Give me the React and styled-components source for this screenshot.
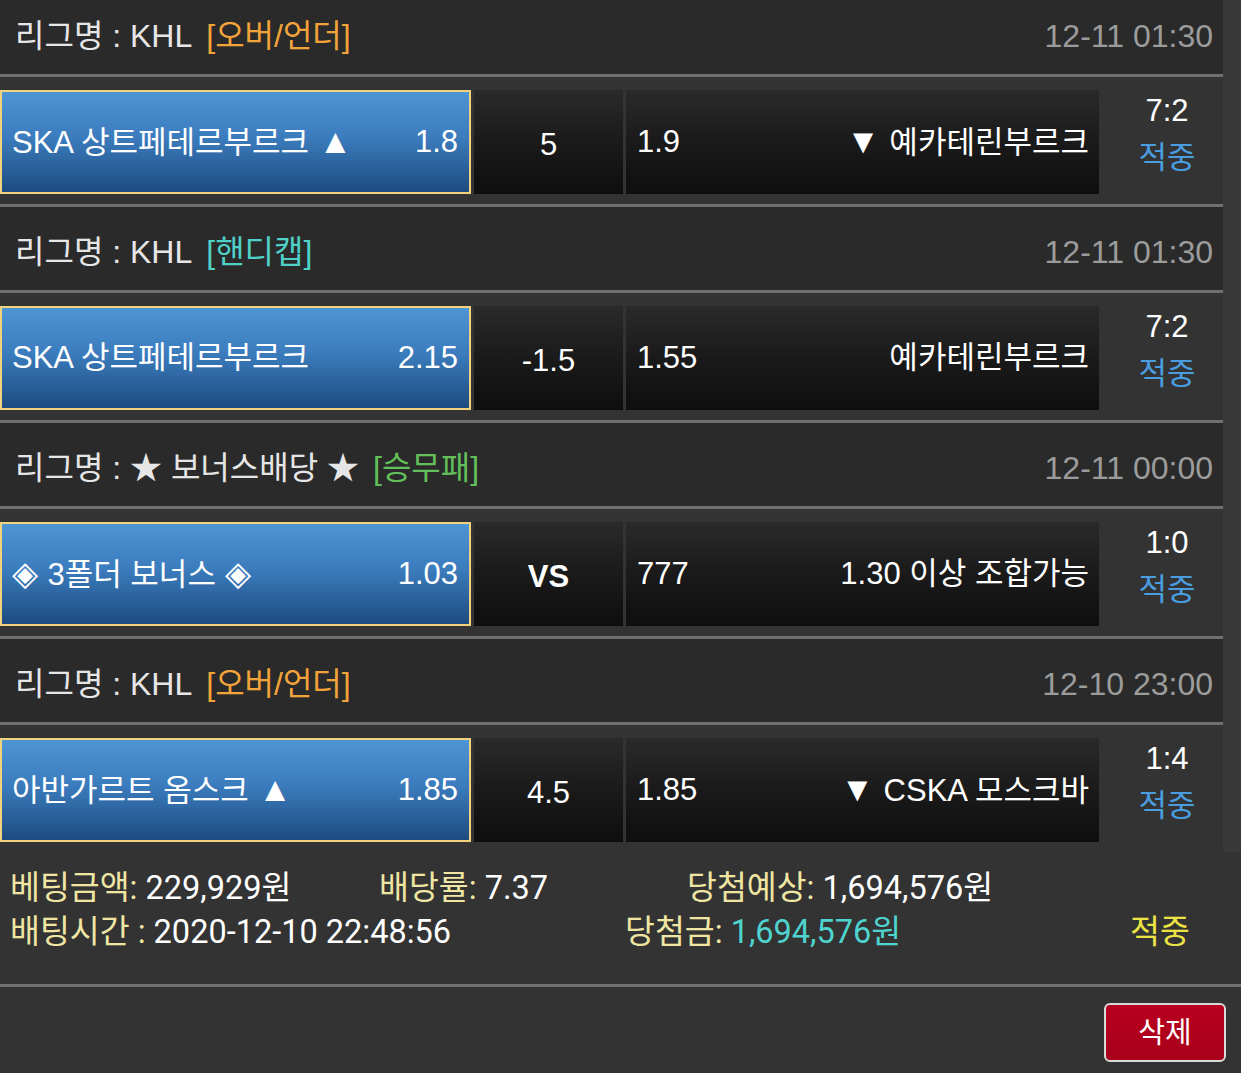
import React from 'react';
import styled, { createGlobalStyle } from 'styled-components';

const Global = createGlobalStyle`
  html, body { margin: 0; padding: 0; background: #393939; }
  body {
    font-family: "Liberation Sans", "Noto Sans CJK KR", sans-serif;
    overflow: hidden;
  }
`;

const Page = styled.div`
  width: 1241px;
  height: 1073px;
  overflow: hidden;
`;

const List = styled.div`
  width: 1223px;
  margin-top: -9px;
`;

const Header = styled.div`
  box-sizing: border-box;
  height: 86px;
  background: #2a2a2a;
  border-bottom: 3px solid #707070;
  display: flex;
  align-items: center;
  justify-content: space-between;
  padding: 6px 10px 0 15px;
  font-size: 32px;
  line-height: 36px;
  color: #e6e6e6;
`;

const League = styled.div`
  display: flex;
  align-items: center;
  white-space: pre;
`;

const Tag = styled.span`
  color: ${p => p.$color};
  margin-left: 14px;
`;

const DateText = styled.span`
  color: #9c9c9c;
`;

const Row = styled.div`
  box-sizing: border-box;
  height: ${p => (p.$last ? 127 : 130)}px;
  background: #333;
  border-bottom: ${p => (p.$last ? 'none' : '3px solid #707070')};
  padding: 13px 0 10px;
  display: flex;
  font-size: 31px;
  line-height: 36px;
  color: #fff;
`;

const HomeCell = styled.div`
  box-sizing: border-box;
  width: 471px;
  height: 104px;
  margin-right: 3px;
  border: 2px solid #f2d27c;
  background: linear-gradient(to bottom, #4e95d6 0%, #3b7cbd 45%, #1d4b80 100%);
  display: flex;
  align-items: center;
  justify-content: space-between;
  padding: 0 11px 0 10px;
`;

const Arrow = styled.span`
  font-size: 34px;
`;

const Diamond = styled.span`
  font-size: 34px;
`;

const DarkCell = styled.div`
  box-sizing: border-box;
  height: 104px;
  background: linear-gradient(to bottom, #2a2a2a 0%, #1a1a1a 50%, #0e0e0e 100%);
  display: flex;
  align-items: center;
`;

const MidCell = styled(DarkCell)`
  width: 149px;
  margin-right: 3px;
  justify-content: center;
  padding-top: 5px;
  font-weight: ${p => (p.$bold ? 700 : 400)};
`;

const AwayCell = styled(DarkCell)`
  width: 473px;
  justify-content: space-between;
  padding: 0 10px 0 11px;
`;

const ScoreCell = styled.div`
  width: 124px;
  height: 104px;
  padding-left: 12px;
  box-sizing: border-box;
  display: flex;
  flex-direction: column;
  align-items: center;
  justify-content: center;
  line-height: 47px;
  margin-top: -8px;
`;

const Hit = styled.span`
  color: ${p => p.$color};
`;

const Footer = styled.div`
  box-sizing: border-box;
  width: 1241px;
  height: 135px;
  padding: 14px 0 0 10px;
  border-bottom: 3px solid #707070;
  font-family: "Roboto", "Noto Sans CJK KR", sans-serif;
  font-size: 32.5px;
  line-height: 44px;
  color: #fff;
  background: #333;
`;

const FooterLine = styled.div`
  display: grid;
  grid-template-columns: ${p => p.$cols};
  white-space: pre;
`;

const Label = styled.span`
  color: #f0e6a4;
`;

const Value = styled.span`
  color: ${p => p.$color || '#fff'};
`;

const Actions = styled.div`
  display: flex;
  justify-content: flex-end;
  padding: 16px 15px 0 0;
  background: #333;
  height: 86px;
  box-sizing: border-box;
`;

const DeleteButton = styled.button`
  width: 122px;
  height: 59px;
  border: 2px solid #d9d9d9;
  border-radius: 6px;
  background: linear-gradient(to bottom, #b8001f, #a8001a);
  color: #fff;
  font-family: "Noto Sans CJK KR", sans-serif;
  font-size: 29px;
  padding: 0 0 5px;
  cursor: pointer;
`;

const games = [
  {
    tag: '[오버/언더]', tagColor: '#f2a33a', league: 'KHL', date: '12-11 01:30',
    home: 'SKA 상트페테르부르크', up: true, homeOdd: '1.8', mid: '5', awayOdd: '1.9',
    away: '예카테린부르크', down: true, score: '7:2',
  },
  {
    tag: '[핸디캡]', tagColor: '#4fd1c8', league: 'KHL', date: '12-11 01:30',
    home: 'SKA 상트페테르부르크', homeOdd: '2.15', mid: '-1.5', awayOdd: '1.55',
    away: '예카테린부르크', score: '7:2',
  },
  {
    tag: '[승무패]', tagColor: '#62bf5a', league: '★ 보너스배당 ★', date: '12-11 00:00',
    home: '3폴더 보너스', bonus: true, homeOdd: '1.03', mid: 'VS', bold: true, awayOdd: '777',
    away: '1.30 이상 조합가능', score: '1:0',
  },
  {
    tag: '[오버/언더]', tagColor: '#f2a33a', league: 'KHL', date: '12-10 23:00',
    home: '아반가르트 옴스크', up: true, homeOdd: '1.85', mid: '4.5', awayOdd: '1.85',
    away: 'CSKA 모스크바', down: true, score: '1:4',
  },
];

export default function App() {
  return (
    <Page>
      <Global />
      <List>
        {games.map((g, i) => (
          <React.Fragment key={i}>
            <Header>
              <League>
                {`리그명 : ${g.league}`}
                <Tag $color={g.tagColor}>{g.tag}</Tag>
              </League>
              <DateText>{g.date}</DateText>
            </Header>
            <Row $last={i === games.length - 1}>
              <HomeCell>
                <span>
                  {g.bonus && <Diamond>◈ </Diamond>}
                  {g.home}
                  {g.bonus && <Diamond> ◈</Diamond>}
                  {g.up && <Arrow> ▲</Arrow>}
                </span>
                <span>{g.homeOdd}</span>
              </HomeCell>
              <MidCell $bold={g.bold}>{g.mid}</MidCell>
              <AwayCell>
                <span>{g.awayOdd}</span>
                <span>
                  {g.down && <Arrow>▼ </Arrow>}
                  {g.away}
                </span>
              </AwayCell>
              <ScoreCell>
                <span>{g.score}</span>
                <Hit $color="#4a9ee0">적중</Hit>
              </ScoreCell>
            </Row>
          </React.Fragment>
        ))}
      </List>
      <Footer>
        <FooterLine $cols="369px 308px 1fr">
          <span><Label>베팅금액: </Label><Value>229,929원</Value></span>
          <span><Label>배당률: </Label><Value>7.37</Value></span>
          <span><Label>당첨예상: </Label><Value>1,694,576원</Value></span>
        </FooterLine>
        <FooterLine $cols="615px 505px 1fr">
          <span><Label>배팅시간 : </Label><Value>2020-12-10 22:48:56</Value></span>
          <span><Label>당첨금: </Label><Value $color="#4fd3cf">1,694,576원</Value></span>
          <Hit $color="#ece444">적중</Hit>
        </FooterLine>
      </Footer>
      <Actions>
        <DeleteButton>삭제</DeleteButton>
      </Actions>
    </Page>
  );
}
